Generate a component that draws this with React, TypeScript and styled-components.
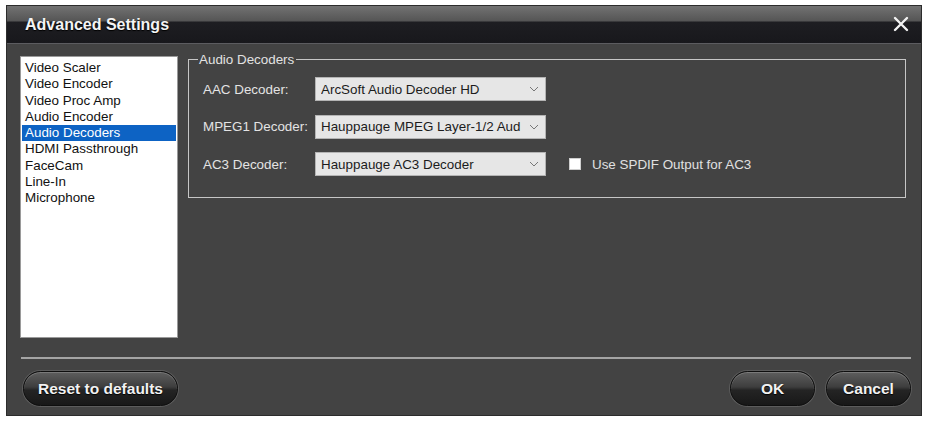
import styled, { createGlobalStyle } from "styled-components";

const Global = createGlobalStyle`
  body {
    margin: 0;
    background: #ffffff;
    font-family: "Liberation Sans", Arial, sans-serif;
  }
`;

const categories = [
  "Video Scaler",
  "Video Encoder",
  "Video Proc Amp",
  "Audio Encoder",
  "Audio Decoders",
  "HDMI Passthrough",
  "FaceCam",
  "Line-In",
  "Microphone",
];

const decoders = [
  { label: "AAC Decoder:", value: "ArcSoft Audio Decoder HD" },
  { label: "MPEG1 Decoder:", value: "Hauppauge MPEG Layer-1/2 Aud" },
  { label: "AC3 Decoder:", value: "Hauppauge AC3 Decoder", spdif: true },
];

export default function App() {
  return (
    <>
      <Global />
      <Dialog>
        <TitleBar>
          <Title>Advanced Settings</Title>
          <CloseButton aria-label="Close">
            <svg width="16" height="16" viewBox="0 0 16 16">
              <path d="M2 2 L14 14 M14 2 L2 14" stroke="#f2f2f2" strokeWidth="2.4" strokeLinecap="round" />
            </svg>
          </CloseButton>
        </TitleBar>
        <Body>
          <Main>
            <CategoryList>
              {categories.map((c) => (
                <CategoryItem key={c} $selected={c === "Audio Decoders"}>
                  {c}
                </CategoryItem>
              ))}
            </CategoryList>
            <Panel>
              <GroupBox>
                <Legend>Audio Decoders</Legend>
                {decoders.map((d) => (
                  <FieldRow key={d.label}>
                    <FieldLabel>{d.label}</FieldLabel>
                    <Select>
                      <SelectText>{d.value}</SelectText>
                      <svg width="10" height="6" viewBox="0 0 10 6">
                        <path d="M1 1 L5 5 L9 1" fill="none" stroke="#777" strokeWidth="1" />
                      </svg>
                    </Select>
                    {d.spdif && (
                      <CheckLabel>
                        <CheckBox />
                        Use SPDIF Output for AC3
                      </CheckLabel>
                    )}
                  </FieldRow>
                ))}
              </GroupBox>
            </Panel>
          </Main>
          <Separator />
          <Footer>
            <PillButton $width={155}>Reset to defaults</PillButton>
            <Spacer />
            <PillButton $width={85}>OK</PillButton>
            <PillButton $width={85}>Cancel</PillButton>
          </Footer>
        </Body>
      </Dialog>
    </>
  );
}

const Dialog = styled.div`
  margin: 5px 0 0 6px;
  width: 916px;
  height: 411px;
  background: #434343;
  border: 1px solid #2c2c2c;
  box-sizing: border-box;
  display: flex;
  flex-direction: column;
`;

const TitleBar = styled.div`
  height: 38px;
  flex: none;
  box-sizing: border-box;
  display: flex;
  align-items: center;
  padding: 0 12px 0 18px;
  background: linear-gradient(
    to bottom,
    #727272 0px,
    #555555 15px,
    #1e1e22 16px,
    #18181c 100%
  );
  border-bottom: 1px solid #5c5c60;
`;

const Title = styled.div`
  flex: 1;
  color: #f4f4f4;
  font-size: 16px;
  font-weight: bold;
  text-shadow: 0 1px 1px #000;
`;

const CloseButton = styled.div`
  width: 16px;
  height: 16px;
  display: flex;
  margin-bottom: 2px;
`;

const Body = styled.div`
  flex: 1;
  display: flex;
  flex-direction: column;
  padding: 6px 10px 8px 13px;
`;

const Main = styled.div`
  display: flex;
  gap: 10px;
  height: 288px;
`;

const CategoryList = styled.ul`
  list-style: none;
  margin: 6px 0 0;
  width: 158px;
  box-sizing: border-box;
  padding: 3px 1px 1px;
  background: #ffffff;
  border: 1px solid #9a9a9a;
  font-size: 13.4px;
`;

const CategoryItem = styled.li<{ $selected?: boolean }>`
  height: 16.3px;
  line-height: 16px;
  padding-left: 3px;
  color: ${(p) => (p.$selected ? "#ffffff" : "#111111")};
  background: ${(p) => (p.$selected ? "#0d63c4" : "transparent")};
`;

const Panel = styled.div`
  flex: 1;
  padding: 2px 5px 0 0;
`;

const GroupBox = styled.fieldset`
  margin: 0;
  height: 146px;
  box-sizing: border-box;
  border: 1px solid #c6c6c6;
  padding: 10px 0 0 14px;
  display: flex;
  flex-direction: column;
  gap: 13.5px;
`;

const Legend = styled.legend`
  color: #e2e2e2;
  font-size: 13.4px;
  padding: 0 2px 0 1px;
  margin-left: -5px;
`;

const FieldRow = styled.div`
  display: flex;
  align-items: center;
  height: 24px;
`;

const FieldLabel = styled.div`
  width: 112px;
  color: #e4e4e4;
  font-size: 13.4px;
`;

const Select = styled.div`
  width: 231px;
  height: 24px;
  box-sizing: border-box;
  display: flex;
  align-items: center;
  padding: 0 6px 0 5px;
  background: #e6e6e6;
  border: 1px solid #b4b4b4;
`;

const SelectText = styled.span`
  flex: 1;
  color: #1c1c1c;
  font-size: 13.4px;
  white-space: nowrap;
  overflow: hidden;
`;

const CheckLabel = styled.label`
  display: flex;
  align-items: center;
  gap: 11px;
  margin-left: 23px;
  color: #e0e0e0;
  font-size: 13.4px;
`;

const CheckBox = styled.span`
  width: 12px;
  height: 12px;
  background: #ffffff;
  border: 1px solid #cfcfcf;
  box-sizing: border-box;
`;

const Separator = styled.div`
  margin: 19px 0 0 1px;
  height: 2px;
  background: #a4a4a4;
`;

const Footer = styled.div`
  display: flex;
  align-items: center;
  gap: 11px;
  margin-top: 12px;
  padding: 0 0 0 3px;
`;

const Spacer = styled.div`
  flex: 1;
`;

const PillButton = styled.div<{ $width: number }>`
  width: ${(p) => p.$width}px;
  height: 35px;
  box-sizing: border-box;
  border-radius: 18px;
  display: flex;
  align-items: center;
  justify-content: center;
  color: #f2f2f2;
  font-size: 15.5px;
  font-weight: bold;
  text-shadow: 0 1px 1px #000;
  background: linear-gradient(
    to bottom,
    #5e5e5e 0%,
    #3e3e3e 45%,
    #242424 55%,
    #181818 100%
  );
  border: 1px solid #0e0e0e;
  box-shadow: 0 0 0 1px #5c5c5c, inset 0 1px 0 #7a7a7a;
`;
